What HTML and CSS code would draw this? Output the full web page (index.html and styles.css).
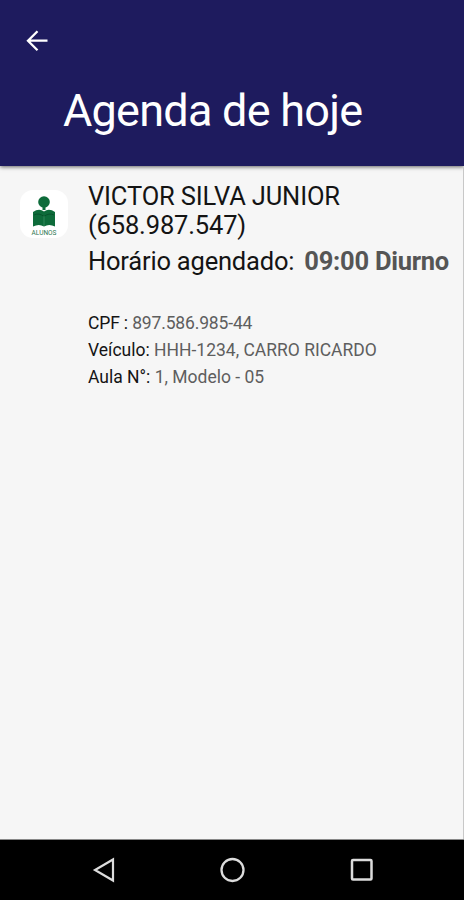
FILE: index.html
```html
<!DOCTYPE html>
<html lang="pt-BR">
<head>
    <meta charset="UTF-8">
    <meta name="viewport" content="width=device-width, initial-scale=1.0">
    <title>Agenda de hoje</title>
    <link rel="stylesheet" href="styles.css">
</head>
<body>
    <header class="app-bar">
        <a href="#" class="back" aria-label="Voltar">
            <svg width="24" height="24" viewBox="0 0 24 24" fill="none" stroke="#fff" stroke-width="2.3">
                <path d="M22.500 11.700H3M12.500 2.200L3 11.700l9.500 9.500"/>
            </svg>
        </a>
        <h1>Agenda de hoje</h1>
    </header>

    <main class="content">
        <div class="aula">
            <div class="avatar">
                <svg width="26" height="31" viewBox="0 0 26 31" fill="#0d6b3a">
                    <circle cx="13" cy="6" r="5.800"/>
                    <path d="M11.500 11h3v3h-3z"/>
                    <path d="M2 16Q8 12 13 15.500Q18 12 24 16V30.500Q18 27.500 13 30.500Q8 27.500 2 30.500Z"/>
                    <path d="M3 19Q8 16.500 13 20.500Q18 16.500 23 19" fill="none" stroke="#07522b" stroke-width="1"/>
                    <path d="M13 20V30" stroke="#3c9163" stroke-width=".8"/>
                </svg>
                <span>ALUNOS</span>
            </div>
            <div class="info">
                <h2>VICTOR SILVA JUNIOR<br>(658.987.547)</h2>
                <p class="horario">Horário agendado: <strong>09:00 Diurno</strong></p>
                <ul class="detalhes">
                    <li class="cpf"><b>CPF :</b> 897.586.985-44</li>
                    <li class="veiculo"><b>Veículo:</b> HHH-1234, CARRO RICARDO</li>
                    <li class="numero"><b>Aula N°:</b> 1, Modelo - 05</li>
                </ul>
            </div>
        </div>
    </main>

    <nav class="nav-bar">
        <svg width="24" height="26" viewBox="0 0 24 26" fill="none" stroke="#dcdcdc" stroke-width="2.2">
            <path d="M21 2.500V23.500L3 13Z"/>
        </svg>
        <svg width="26" height="26" viewBox="0 0 26 26" fill="none" stroke="#dcdcdc" stroke-width="2.300">
            <circle cx="12.500" cy="13" r="11"/>
        </svg>
        <svg width="24" height="26" viewBox="0 0 24 26" fill="none" stroke="#dcdcdc" stroke-width="2.500">
            <rect x="2" y="3" width="19.500" height="19.500" rx="1"/>
        </svg>
    </nav>
</body>
</html>
```

FILE: styles.css
```css
* {
    box-sizing: border-box;
    margin: 0;
    padding: 0;
}
body {
    display: flex;
    flex-direction: column;
    height: 900px;
    font-family: Roboto, sans-serif;
    background: #f6f6f6;
    color: #141414;
    overflow: hidden;
}
.app-bar {
    height: 166px;
    padding: 29px 25px 0;
    background: #1e1b5e;
    color: #fff;
    box-shadow: 0 1px 4px rgba(0, 0, 0, 0.6);
}
.back {
    display: block;
    width: 24px;
    height: 24px;
}
.app-bar h1 {
    padding: 32px 0 0 38px;
    font-size: 45px;
    font-weight: 400;
    line-height: 52px;
    letter-spacing: -0.75px;
    white-space: nowrap;
}
.content {
    flex: 1;
    border-right: 1px solid #c8c8c8;
}
.aula {
    display: flex;
    gap: 20px;
    padding: 15px 0 0 20px;
}
.avatar {
    display: flex;
    flex-direction: column;
    align-items: center;
    flex: none;
    width: 48px;
    height: 48px;
    margin-top: 9px;
    padding-top: 6px;
    border-radius: 13px;
    background: #fff;
}
.avatar span {
    margin-top: 3px;
    font-size: 6.5px;
    line-height: 7px;
    color: #2c7550;
}
.info {
    white-space: nowrap;
}
.info h2 {
    padding-top: 1px;
    font-size: 25.5px;
    font-weight: 400;
    line-height: 29px;
    letter-spacing: -0.15px;
}
.horario {
    margin-top: 6px;
    font-size: 25.5px;
    line-height: 30px;
    letter-spacing: -0.2px;
}
.horario strong {
    margin-left: 4px;
    font-weight: 700;
    letter-spacing: -0.25px;
    color: #555;
}
.detalhes {
    margin-top: 34px;
    list-style: none;
    font-size: 17.5px;
    line-height: 27px;
    color: #5e5e5e;
}
.detalhes b {
    font-weight: 400;
    color: #141414;
}
.cpf {
    letter-spacing: -0.15px;
}
.nav-bar {
    display: flex;
    justify-content: space-between;
    align-items: center;
    height: 61px;
    padding: 0 90px 0 92px;
    border-top: 1px solid #888;
    background: #000;
}
```
